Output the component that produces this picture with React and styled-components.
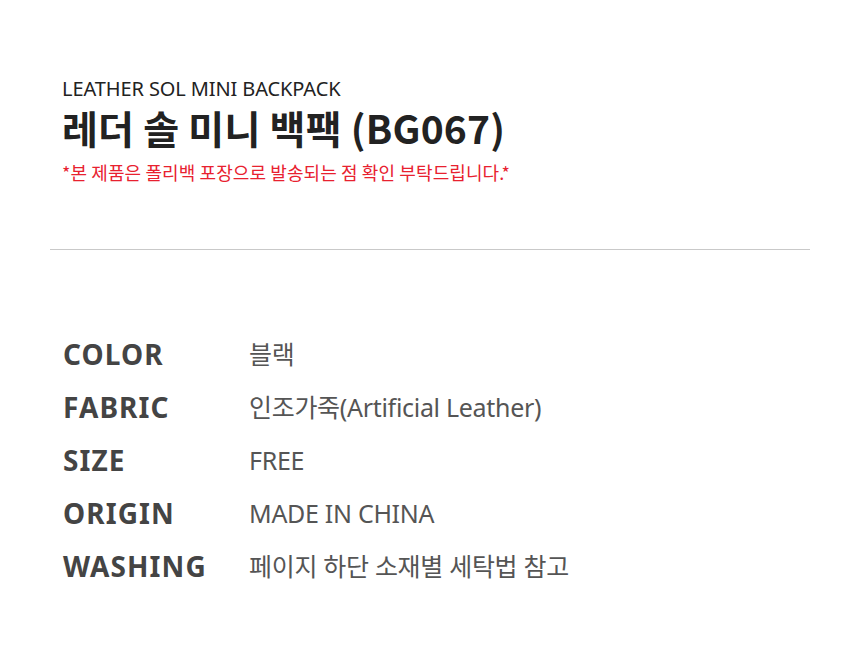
import React from "react";
import styled, { createGlobalStyle } from "styled-components";

const GlobalStyle = createGlobalStyle`
  html, body {
    margin: 0;
    padding: 0;
    background: #fff;
  }
  body {
    font-family: "Noto Sans", "Noto Sans CJK KR", sans-serif;
  }
`;

const Page = styled.div`
  width: 860px;
  height: 646px;
  background: #fff;
  padding: 76px 50px 0;
  box-sizing: border-box;
`;

const Header = styled.header`
  padding: 0 12px;
`;

const SubTitle = styled.p`
  margin: 0;
  font-family: "Noto Sans", "Noto Sans CJK KR", sans-serif;
  font-size: 20px;
  line-height: 26px;
  color: #222;
  letter-spacing: -0.1px;
`;

const Title = styled.h1`
  margin: 3px 0 0;
  font-family: "Noto Sans CJK KR", sans-serif;
  font-size: 39px;
  line-height: 44px;
  font-weight: 700;
  color: #222;
  letter-spacing: 0.2px;
`;

const Notice = styled.p`
  margin: 11px 0 0;
  font-family: "Noto Sans CJK KR", sans-serif;
  font-size: 18px;
  line-height: 24px;
  color: #e8212f;
  letter-spacing: 0.1px;
`;

const Divider = styled.hr`
  margin: 65px 0 0;
  border: 0;
  border-top: 1px solid #c9c9c9;
`;

const SpecTable = styled.dl`
  margin: 78px 0 0;
  padding: 0 13px;
  display: grid;
  grid-template-columns: 186px 1fr;
`;

const Label = styled.dt`
  font-family: "Noto Sans", sans-serif;
  font-size: 28px;
  font-weight: 700;
  line-height: 53px;
  color: #444;
  letter-spacing: 1.1px;
`;

const Value = styled.dd`
  margin: 0;
  font-family: "Noto Sans", "Noto Sans CJK KR", sans-serif;
  font-size: 25px;
  line-height: 53px;
  color: #555;
  letter-spacing: -0.3px;
`;

const specs = [
  ["COLOR", "블랙"],
  ["FABRIC", "인조가죽(Artificial Leather)"],
  ["SIZE", "FREE"],
  ["ORIGIN", "MADE IN CHINA"],
  ["WASHING", "페이지 하단 소재별 세탁법 참고"],
];

export default function App() {
  return (
    <Page>
      <GlobalStyle />
      <Header>
        <SubTitle>LEATHER SOL MINI BACKPACK</SubTitle>
        <Title>레더 솔 미니 백팩 (BG067)</Title>
        <Notice>*본 제품은 폴리백 포장으로 발송되는 점 확인 부탁드립니다.*</Notice>
      </Header>
      <Divider />
      <SpecTable>
        {specs.map(([label, value]) => (
          <React.Fragment key={label}>
            <Label>{label}</Label>
            <Value>{value}</Value>
          </React.Fragment>
        ))}
      </SpecTable>
    </Page>
  );
}
